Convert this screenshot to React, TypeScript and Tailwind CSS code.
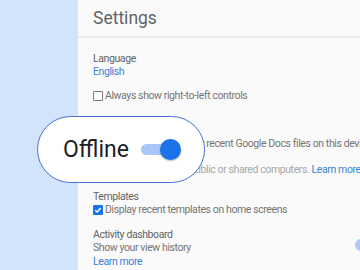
const Checkbox = ({ checked }: { checked?: boolean }) =>
  checked ? (
    <span className="flex h-[10px] w-[10px] shrink-0 items-center justify-center rounded-[1px] bg-[#1a73e8]">
      <svg width="8" height="8" viewBox="0 0 10 10">
        <path d="M1.5 5.2 L4 7.5 L8.5 2.5" fill="none" stroke="white" strokeWidth="1.8" />
      </svg>
    </span>
  ) : (
    <span className="h-[10px] w-[10px] shrink-0 rounded-[1px] border border-[#7a7a7a] bg-white" />
  );

export default function App() {
  return (
    <div
      className="relative flex h-[270px] w-[360px] overflow-hidden"
      style={{ fontFamily: "Roboto, 'Liberation Sans', sans-serif" }}
    >
      <div className="w-[78px] shrink-0 bg-[#d2e3fc]" />

      <div className="min-w-0 flex-1 bg-[#fafafa]">
        <div className="flex h-[38px] items-center border-b-2 border-[#ececec] pl-[15px]">
          <h1 className="text-[17.5px] text-[#5f6368]">Settings</h1>
        </div>

        <div className="whitespace-nowrap pl-[15px] text-[10.5px] leading-[13px] tracking-[-0.4px] text-[#757575]">
          <div className="mt-[14px] text-[#5f6368]">Language</div>
          <div className="text-[#3b82d8]">English</div>
          <div className="mt-[11px] flex items-center gap-[2px]">
            <Checkbox />
            <span>Always show right-to-left controls</span>
          </div>

          <div className="mt-[35px]">
            Create, open and edit your recent Google Docs files on this device
          </div>
          <div className="mt-[13px] text-[#a8a8a8]">
            Not recommended on public or shared computers.{" "}
            <span className="text-[#3b82d8]">Learn more</span>
          </div>

          <div className="mt-[14px] text-[#5f6368]">Templates</div>
          <div className="flex items-center gap-[2px]">
            <Checkbox checked />
            <span>Display recent templates on home screens</span>
          </div>

          <div className="relative">
            <div className="mt-[12px] text-[#5f6368]">Activity dashboard</div>
            <div>Show your view history</div>
            <div className="mt-[1px] text-[#3b82d8]">Learn more</div>
            <span className="absolute left-[262px] top-[11px] h-[12px] w-[12px] rounded-full bg-[#aecbfa]" />
          </div>
        </div>
      </div>

      {/* zoomed callout over the offline row */}
      <div className="absolute left-[37px] top-[116px] flex h-[67px] w-[168px] items-center rounded-full border border-[#4a72d4] bg-white pl-[25px]">
        <span className="text-[23px] leading-none text-[#202124]">Offline</span>
        <div className="relative ml-[12px] h-[11px] w-[32px] rounded-full bg-[#a8c7fa]">
          <span className="absolute right-[-8px] top-[-5px] h-[21px] w-[21px] rounded-full bg-[#1a73e8] shadow-[0_1px_2px_rgba(0,0,0,0.3)]" />
        </div>
      </div>
    </div>
  );
}
